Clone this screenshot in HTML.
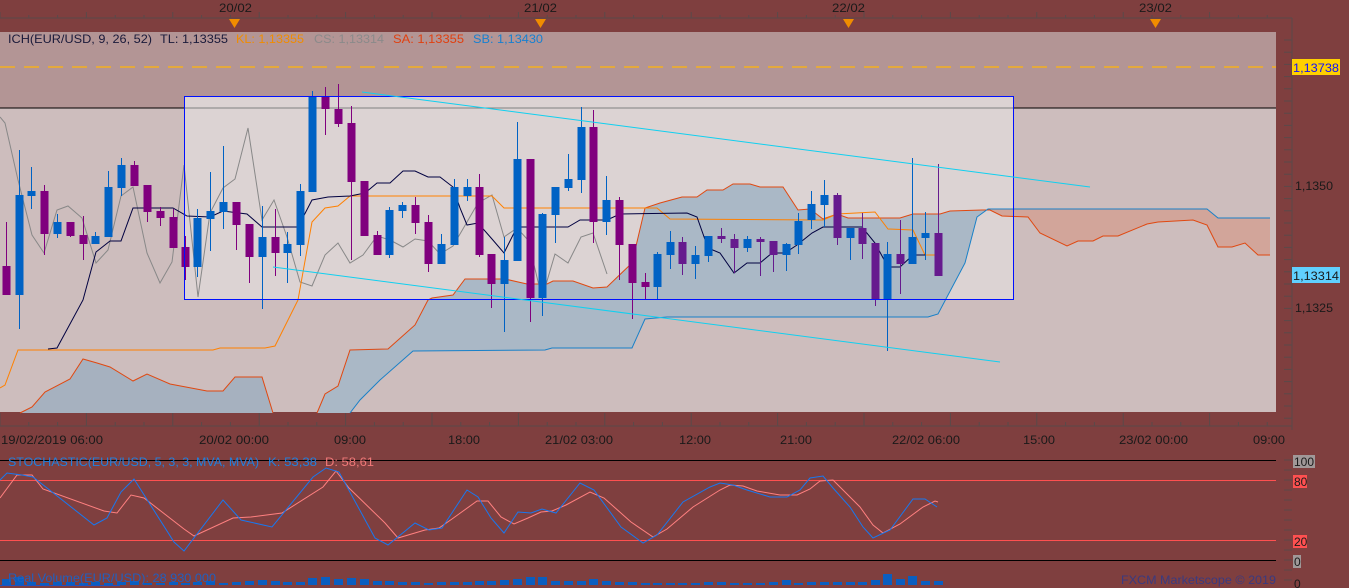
<!DOCTYPE html>
<html><head><meta charset="utf-8">
<style>
html,body{margin:0;padding:0;background:#7f3f3f;width:1349px;height:588px;overflow:hidden}
svg{display:block}
text{font-family:"Liberation Sans",sans-serif;font-size:12px}
</style></head><body>
<svg id="s" width="1349" height="588" xmlns="http://www.w3.org/2000/svg">
<rect width="1349" height="588" fill="#7f3f3f"/>
<line x1="0" y1="18" x2="1292" y2="18" stroke="#5a4a4a"/>
<g id="topticks" stroke="#5a4a4a"></g>
<text x="219" y="12" fill="#1a1a1a" textLength="33" lengthAdjust="spacingAndGlyphs">20/02</text>
<text x="524" y="12" fill="#1a1a1a" textLength="33" lengthAdjust="spacingAndGlyphs">21/02</text>
<text x="832" y="12" fill="#1a1a1a" textLength="33" lengthAdjust="spacingAndGlyphs">22/02</text>
<text x="1139" y="12" fill="#1a1a1a" textLength="33" lengthAdjust="spacingAndGlyphs">23/02</text>
<g fill="#f08c00">
<polygon points="229,19 240,19 234.5,28"/><polygon points="535,19 546,19 540.5,28"/>
<polygon points="843,19 854,19 848.5,28"/><polygon points="1150,19 1161,19 1155.5,28"/>
</g>
<rect x="0" y="32" width="1276" height="76" fill="#b39595"/>
<rect x="0" y="108" width="1276" height="304" fill="#cdbdbd"/>
<rect x="184" y="96" width="830" height="204" fill="#dcd3d3"/>
<line x1="0" y1="108" x2="1276" y2="108" stroke="#000"/>
<line x1="184" y1="108" x2="1014" y2="108" stroke="#808080"/>
<line x1="0" y1="67" x2="1276" y2="67" stroke="#f5b020" stroke-width="1.4" stroke-dasharray="15 9"/>
<g id="cloud"></g>
<g id="lines"></g>
<g id="candles"></g>
<rect x="184.5" y="96.5" width="829" height="203" fill="none" stroke="#0010ff"/>
<line x1="362" y1="92" x2="1090" y2="187" stroke="#10d0f0"/>
<line x1="273" y1="267" x2="1000" y2="362" stroke="#10d0f0"/>
<text x="8" y="43" fill="#1a1a3a" textLength="144" lengthAdjust="spacingAndGlyphs">ICH(EUR/USD, 9, 26, 52)</text>
<text x="160" y="43" fill="#1a1a3a" textLength="68" lengthAdjust="spacingAndGlyphs">TL: 1,13355</text>
<text x="236" y="43" fill="#f08c00" textLength="68" lengthAdjust="spacingAndGlyphs">KL: 1,13355</text>
<text x="314" y="43" fill="#8a8a8a" textLength="70" lengthAdjust="spacingAndGlyphs">CS: 1,13314</text>
<text x="393" y="43" fill="#e04010" textLength="71" lengthAdjust="spacingAndGlyphs">SA: 1,13355</text>
<text x="473" y="43" fill="#1880d0" textLength="70" lengthAdjust="spacingAndGlyphs">SB: 1,13430</text>
<line x1="1292" y1="18" x2="1292" y2="430" stroke="#5a4a4a"/>
<g id="rticks" stroke="#5a4a4a"></g>
<rect x="1292" y="59" width="48" height="16" fill="#ffd000"/>
<text x="1293" y="72" fill="#1010ff" textLength="46" lengthAdjust="spacingAndGlyphs">1,13738</text>
<text x="1295" y="190" fill="#1a1a1a" textLength="38" lengthAdjust="spacingAndGlyphs">1,1350</text>
<rect x="1292" y="267" width="48" height="16" fill="#60d0ff"/>
<text x="1293" y="280" fill="#1a1a1a" textLength="46" lengthAdjust="spacingAndGlyphs">1,13314</text>
<text x="1295" y="312" fill="#1a1a1a" textLength="38" lengthAdjust="spacingAndGlyphs">1,1325</text>
<line x1="0" y1="426" x2="1292" y2="426" stroke="#5a4a4a"/>
<g id="bticks" stroke="#5a4a4a"></g>
<g fill="#1a1a1a">
<text x="1" y="444" textLength="102" lengthAdjust="spacingAndGlyphs">19/02/2019 06:00</text>
<text x="199" y="444" textLength="70" lengthAdjust="spacingAndGlyphs">20/02 00:00</text>
<text x="334" y="444" textLength="32" lengthAdjust="spacingAndGlyphs">09:00</text>
<text x="448" y="444" textLength="32" lengthAdjust="spacingAndGlyphs">18:00</text>
<text x="545" y="444" textLength="68" lengthAdjust="spacingAndGlyphs">21/02 03:00</text>
<text x="679" y="444" textLength="32" lengthAdjust="spacingAndGlyphs">12:00</text>
<text x="780" y="444" textLength="32" lengthAdjust="spacingAndGlyphs">21:00</text>
<text x="892" y="444" textLength="68" lengthAdjust="spacingAndGlyphs">22/02 06:00</text>
<text x="1023" y="444" textLength="32" lengthAdjust="spacingAndGlyphs">15:00</text>
<text x="1119" y="444" textLength="69" lengthAdjust="spacingAndGlyphs">23/02 00:00</text>
<text x="1253" y="444" textLength="32" lengthAdjust="spacingAndGlyphs">09:00</text>
</g>
<line x1="0" y1="460.5" x2="1276" y2="460.5" stroke="#000"/>
<line x1="0" y1="480.5" x2="1276" y2="480.5" stroke="#ff5050"/>
<line x1="0" y1="540.5" x2="1276" y2="540.5" stroke="#ff5050"/>
<line x1="0" y1="560.5" x2="1276" y2="560.5" stroke="#000"/>
<text x="8" y="466" fill="#2080e0" textLength="251" lengthAdjust="spacingAndGlyphs">STOCHASTIC(EUR/USD, 5, 3, 3, MVA, MVA)</text>
<text x="268" y="466" fill="#2080e0" textLength="49" lengthAdjust="spacingAndGlyphs">K: 53,38</text>
<text x="325" y="466" fill="#f07878" textLength="49" lengthAdjust="spacingAndGlyphs">D: 58,61</text>
<polyline id="dl" fill="none" stroke="#ff8080" stroke-width="1"/>
<polyline id="kl" fill="none" stroke="#1878f0" stroke-width="1"/>
<rect x="1293" y="455" width="22" height="13" fill="#a09898"/>
<text x="1294" y="466" fill="#1a1a1a">100</text>
<rect x="1293" y="475" width="14" height="13" fill="#ff5050"/>
<text x="1294" y="486" fill="#1a1a1a">80</text>
<rect x="1293" y="535" width="14" height="13" fill="#ff5050"/>
<text x="1294" y="546" fill="#1a1a1a">20</text>
<rect x="1293" y="555" width="8" height="13" fill="#a09898"/>
<text x="1294" y="566" fill="#1a1a1a">0</text>
<text x="1294" y="588" fill="#1a1a1a">0</text>
<g id="vol" fill="#0a5ec0"></g>
<line x1="0" y1="585.5" x2="120" y2="585.5" stroke="#2050c0"/>
<text x="8" y="582" fill="#2060c0" textLength="208" lengthAdjust="spacingAndGlyphs">Real Volume(EUR/USD): 28 930 000</text>
<text x="1121" y="584" fill="#3a3a80" textLength="155" lengthAdjust="spacingAndGlyphs">FXCM Marketscope © 2019</text>
</svg>
<script>
var NS="http://www.w3.org/2000/svg";
function el(p,t,a){var e=document.createElementNS(NS,t);for(var k in a)e.setAttribute(k,a[k]);document.getElementById(p).appendChild(e);return e;}
function pts(a){return a.map(function(p){return p[0]+','+p[1]}).join(' ');}
for(var x=0;x<1292;x+=28.8){el('topticks','line',{x1:x,y1:18,x2:x,y2:(Math.round(x/28.8)%3==0?12:15)});el('bticks','line',{x1:x,y1:426,x2:x,y2:(Math.round(x/28.8)%3==0?413:422)});}
for(var y=40;y<430;y+=12.2){el('rticks','line',{x1:1284,y1:y,x2:1292,y2:y});}
for(var y=460;y<588;y+=10){el('rticks','line',{x1:1284,y1:y,x2:1292,y2:y});}
var SA=[[20,413],[32,407],[45,392],[70,379],[83,359],[97,363],[110,367],[133,381],[147,374],[170,384],[207,391],[223,391],[235,377],[262,377],[273,413]];
var SA2=[[317,413],[325,394],[338,386],[350,350],[388,349],[415,325],[428,300],[432,298],[453,295],[465,279],[505,279],[527,284],[547,284],[553,281],[573,281],[593,288],[607,287],[632,263],[645,208],[660,203],[682,197],[697,197],[707,190],[723,190],[733,184],[750,184],[760,187],[783,187],[798,210],[810,209],[823,219],[837,214],[848,218],[900,218],[913,214],[940,214],[950,211],[982,210],[990,210]];
var SB2=[[350,413],[360,400],[380,380],[413,351],[545,350],[552,348],[632,348],[645,319],[667,317],[928,317],[938,314],[965,263],[977,217],[988,209]];
var SAf=[[990,210],[1002,216],[1028,217],[1040,233],[1067,246],[1078,241],[1093,241],[1103,236],[1118,236],[1147,224],[1158,222],[1193,220],[1207,225],[1218,247],[1232,247],[1245,243],[1258,255],[1270,255]];
var SBf=[[988,209],[1207,209],[1218,218],[1270,218]];
el('cloud','polygon',{points:pts(SA),fill:'#a6b1bf'});
el('cloud','polygon',{points:pts(SA2.concat(SB2.slice().reverse())),fill:'#aab8c6'});
el('cloud','polygon',{points:pts(SBf.concat(SAf.slice().reverse())),fill:'#d2a59a'});
el('cloud','polyline',{points:pts(SA),fill:'none',stroke:'#e04810'});
el('cloud','polyline',{points:pts(SA2.concat(SAf.slice(1))),fill:'none',stroke:'#e04810'});
el('cloud','polyline',{points:pts(SB2.concat(SBf.slice(1))),fill:'none',stroke:'#1880c8'});
var CS=[[0,117],[5,123],[18,180],[32,235],[44,253],[57,210],[68,206],[82,218],[96,263],[108,250],[121,196],[133,187],[147,253],[160,283],[172,262],[184,165],[198,297],[210,213],[223,188],[235,179],[248,128],[262,220],[274,200],[287,237],[300,282],[312,286],[325,255],[338,243],[350,263],[363,255],[377,236],[390,240],[403,247],[415,239],[428,241],[440,254],[453,246],[467,222],[478,203],[492,195],[504,237],[517,228],[528,240],[542,298],[555,254],[568,263],[581,237],[593,233],[607,274]];
var KJ=[[0,388],[5,385],[18,350],[213,350],[220,348],[265,348],[275,346],[298,300],[312,222],[325,208],[338,206],[350,196],[492,196],[504,208],[657,208],[670,219],[823,220],[837,214],[875,212],[888,229],[913,230],[925,255],[938,255]];
var TK=[[48,349],[57,348],[83,300],[96,252],[110,241],[121,241],[133,208],[173,208],[187,216],[210,217],[223,211],[247,214],[262,227],[298,227],[312,200],[328,197],[350,196],[365,193],[377,183],[390,183],[403,171],[415,171],[428,177],[440,177],[453,187],[460,208],[467,225],[478,223],[492,239],[504,253],[517,227],[568,227],[580,220],[607,220],[620,214],[687,213],[697,217],[708,248],[720,253],[734,273],[747,263],[760,263],[772,253],[785,253],[797,245],[812,233],[823,227],[862,227],[875,243],[888,267],[900,267],[913,255],[925,255]];
el('lines','polyline',{points:pts(CS),fill:'none',stroke:'#888'});
el('lines','polyline',{points:pts(KJ),fill:'none',stroke:'#ff8000'});
el('lines','polyline',{points:pts(TK),fill:'none',stroke:'#000040'});
var C=[[6,266,295,222,295,'p'],[19,195,295,150,329,'b'],[31,191,196,167,209,'b'],[44,191,234,185,255,'p'],[57,222,234,214,238,'b'],[70,222,236,222,237,'p'],[83,235,244,216,260,'p'],[95,236,244,232,244,'b'],[108,187,237,171,237,'b'],[121,165,188,158,196,'b'],[134,165,186,161,186,'p'],[147,185,212,185,222,'p'],[160,211,218,207,226,'p'],[173,217,248,209,248,'p'],[185,247,267,236,280,'p'],[197,218,267,209,277,'b'],[210,211,219,172,251,'b'],[223,202,212,146,229,'b'],[236,202,225,202,250,'p'],[249,224,257,224,283,'p'],[262,237,257,206,309,'b'],[275,237,253,209,276,'p'],[287,244,253,232,283,'b'],[300,191,245,184,256,'b'],[312,97,192,91,192,'b'],[325,97,109,87,135,'p'],[338,109,124,84,127,'p'],[351,123,182,106,260,'p'],[364,181,236,181,236,'p'],[377,235,255,231,255,'p'],[389,210,255,207,258,'b'],[402,205,211,202,218,'b'],[415,205,223,197,234,'p'],[428,222,264,215,272,'p'],[441,244,264,234,264,'b'],[454,187,245,179,245,'b'],[467,187,196,179,201,'b'],[479,187,255,174,257,'p'],[491,254,284,254,308,'p'],[504,260,284,237,332,'b'],[517,159,261,122,261,'b'],[530,159,298,159,322,'p'],[542,214,298,213,316,'b'],[555,187,215,187,243,'b'],[568,179,188,154,191,'b'],[581,127,180,107,193,'b'],[593,127,222,110,243,'p'],[606,200,222,176,235,'b'],[619,200,245,197,280,'p'],[632,244,283,244,319,'p'],[645,282,287,273,300,'p'],[657,254,287,252,300,'b'],[670,242,255,231,269,'b'],[682,242,264,237,275,'p'],[695,255,264,246,279,'b'],[708,236,256,236,262,'b'],[721,236,239,228,243,'p'],[734,239,248,234,273,'p'],[747,239,248,236,252,'b'],[760,239,242,237,276,'p'],[773,241,255,241,272,'p'],[786,244,255,243,271,'b'],[798,221,245,213,254,'b'],[811,204,220,191,229,'b'],[824,195,205,180,227,'b'],[837,195,238,193,245,'p'],[850,228,238,228,260,'b'],[862,228,244,213,259,'p'],[875,243,300,243,306,'p'],[887,254,300,242,351,'b'],[900,254,264,220,294,'p'],[912,237,264,158,264,'b'],[925,233,238,212,260,'b'],[938,233,276,164,276,'p']];
var H=[6,8,3,2,3,3,2,3,2,3,4,2,2,3,2,3,4,2,3,4,5,4,3,3,7,8,6,7,6,4,4,3,3,2,3,3,3,4,4,5,6,8,8,4,4,4,6,4,3,3,2,2,2,2,2,3,3,2,2,2,3,5,2,3,3,3,3,3,5,11,6,9,4,4];
C.forEach(function(c,i){var col=c[5]=='b'?'#0062c4':(i>50?'#661a8e':'#80007e');
el('candles','line',{x1:c[0]+.5,y1:c[3],x2:c[0]+.5,y2:c[4],stroke:col});
el('candles','rect',{x:c[0]-3.5,y:c[1],width:8,height:Math.max(2,c[2]-c[1]),fill:col});
var h=H[i]||2;el('vol','rect',{x:c[0]-4,y:585-h,width:9,height:h});});
var K=[[0,480],[7,473],[22,475],[33,477],[94,525],[107,518],[121,492],[134,479],[174,542],[184,551],[223,500],[241,520],[272,527],[313,477],[326,468],[339,472],[375,538],[388,545],[415,523],[429,530],[442,528],[467,490],[478,497],[491,518],[504,533],[518,512],[531,513],[542,509],[556,513],[580,483],[594,490],[621,527],[643,543],[657,535],[683,502],[710,487],[720,483],[733,485],[747,490],[770,497],[787,497],[800,490],[810,478],[823,476],[833,488],[850,507],[863,527],[873,538],[890,530],[913,499],[925,499],[937,507]];
var D=[[0,498]];for(var i=1;i<K.length-1;i++){var a=K[i-1][1],b=K[i][1],c=K[i+1][1];D.push([K[i][0]+10,Math.round((a+2*b+c)/4)]);}
D.push([938,502]);
document.getElementById('kl').setAttribute('points',pts(K));
document.getElementById('dl').setAttribute('points',pts(D));
</script>
</body></html>
